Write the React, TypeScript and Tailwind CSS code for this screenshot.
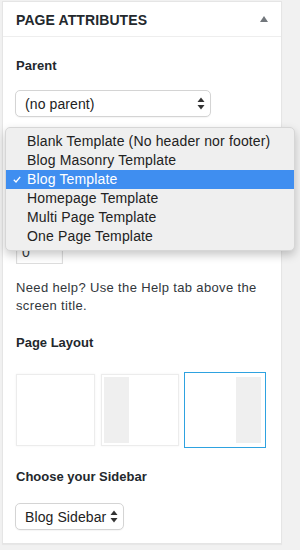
import React from 'react';

const UpDown: React.FC = () => (
  <svg width="8" height="13" viewBox="0 0 8 13" className="shrink-0">
    <path d="M4 0.5 L7.5 5 L0.5 5 Z" fill="#333" />
    <path d="M4 12.5 L7.5 8 L0.5 8 Z" fill="#333" />
  </svg>
);

const FakeSelect: React.FC<{ label: string; width: string }> = ({ label, width }) => (
  <div
    className={`-ml-px flex items-center justify-between h-[27px] ${width} pl-[9px] pr-[5px] rounded-[5px] border border-[#d4d4d4] bg-white shadow-[0_1px_1px_rgba(0,0,0,0.04)] text-[14px] tracking-[0.1px] text-[#222]`}
  >
    <span>{label}</span>
    <UpDown />
  </div>
);

const templates = [
  'Blank Template (No header nor footer)',
  'Blog Masonry Template',
  'Blog Template',
  'Homepage Template',
  'Multi Page Template',
  'One Page Template',
];

export default function App() {
  return (
    <div
      className="relative w-[300px] h-[550px] bg-[#f1f1f1] pt-[1px] pl-[2px] text-[#23282d]"
      style={{ fontFamily: '"Liberation Sans", Arial, sans-serif' }}
    >
      <div className="w-[280px] bg-white border border-[#e5e5e5] shadow-[0_1px_1px_rgba(0,0,0,0.04)]">
        {/* header */}
        <div className="flex items-center justify-between h-[35px] pl-[13px] pr-[13px] border-b border-[#eee]">
          <h2 className="text-[14px] font-bold leading-none tracking-[0.1px] pt-[1px]">PAGE ATTRIBUTES</h2>
          <svg width="8" height="6" viewBox="0 0 8 6">
            <path d="M4 0 L8 6 L0 6 Z" fill="#72777c" />
          </svg>
        </div>

        <div className="px-[13px] pb-[13px] text-[13px] leading-[18px]">
          <p className="mt-[20px] font-bold">Parent</p>
          <div className="mt-[15px]">
            <FakeSelect label="(no parent)" width="w-[196px]" />
          </div>

          {/* covered by the open menu */}
          <div className="invisible">
            <p className="mt-[15px] font-bold">Template</p>
            <div className="mt-[15px] h-[27px]" />
            <p className="mt-[15px] font-bold">Order</p>
          </div>
          <div className="mt-[15px] w-[47px] h-[24px] border border-[#ddd] pl-[5px] text-[14px] leading-[22px] text-[#32373c] shadow-[inset_0_1px_2px_rgba(0,0,0,0.07)]">
            0
          </div>

          <p className="mt-[15px] text-[#32373c] tracking-[0.35px]">
            Need help? Use the Help tab above the screen title.
          </p>

          <p className="mt-[19px] font-bold">Page Layout</p>

          <div className="mt-[20px] flex items-center">
            <div className="w-[79px] h-[72px] border border-[#ececec] shadow-[0_0_2px_rgba(0,0,0,0.06)] bg-white" />
            <div className="ml-[6px] w-[78px] h-[72px] border border-[#ececec] shadow-[0_0_2px_rgba(0,0,0,0.06)] bg-white p-[2px] flex">
              <div className="w-[25px] bg-[#efefef]" />
            </div>
            <div className="ml-[5px] w-[82px] h-[76px] border border-[#2ea2e0] bg-white p-[4px] flex justify-end">
              <div className="w-[25px] bg-[#efefef]" />
            </div>
          </div>

          <p className="mt-[20px] font-bold">Choose your Sidebar</p>
          <div className="mt-[17px]">
            <FakeSelect label="Blog Sidebar" width="w-[109px]" />
          </div>
        </div>
      </div>

      {/* open template menu */}
      <div className="absolute left-[5px] top-[127px] w-[290px] rounded-[5px] bg-[#efefef] border border-[#d6d6d6] shadow-[0_4px_10px_rgba(0,0,0,0.22)] py-[4px] text-[14px] tracking-[0.15px] text-[#222]">
        {templates.map((t) => {
          const active = t === 'Blog Template';
          return (
            <div
              key={t}
              className={`relative h-[19px] leading-[19px] pl-[21px] ${active ? 'bg-[#3f8ef0] text-white' : ''}`}
            >
              {active && (
                <svg className="absolute left-[7px] top-[6px]" width="8" height="7" viewBox="0 0 8 7">
                  <path d="M0.8 3.8 L3 6 L7.2 0.8" stroke="white" strokeWidth="1.3" fill="none" />
                </svg>
              )}
              {t}
            </div>
          );
        })}
      </div>
    </div>
  );
}
